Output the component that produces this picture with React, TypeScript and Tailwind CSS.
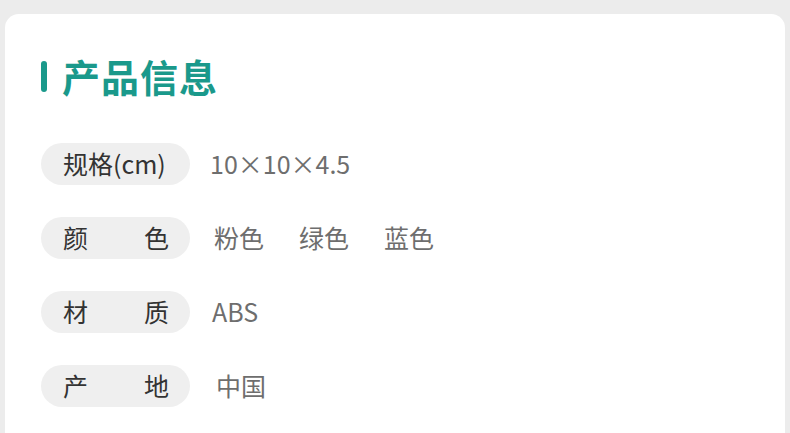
import React from 'react';

const font = { fontFamily: '"Noto Sans CJK SC", "Noto Sans", sans-serif' };

type Row = { label: string[]; values: string[]; indent: string };

const rows: Row[] = [
  { label: ['规格(cm)'], values: ['10×10×4.5'], indent: 'ml-[20px]' },
  { label: ['颜', '色'], values: ['粉色', '绿色', '蓝色'], indent: 'ml-[24px]' },
  { label: ['材', '质'], values: ['ABS'], indent: 'ml-[22px]' },
  { label: ['产', '地'], values: ['中国'], indent: 'ml-[26px]' },
];

const App: React.FC = () => {
  return (
    <div className="w-[790px] h-[433px] overflow-hidden bg-[#ececec] pt-[14px] px-[5px]" style={font}>
      {/* card */}
      <div className="h-full bg-white rounded-t-[14px] pl-[36px] pt-[40px]">
        {/* title */}
        <div className="flex items-center gap-[15px] h-[44px]">
          <div className="w-[6px] h-[31px] rounded-full bg-[#1a998b]" />
          <h2 className="text-[38px] leading-[44px] font-bold text-[#1a998b] tracking-[1px]">产品信息</h2>
        </div>

        {/* rows */}
        <div className="mt-[45px] flex flex-col gap-[32px]">
          {rows.map((row, i) => (
            <div key={i} className="flex items-center h-[42px]">
              <div className="w-[149px] h-[42px] rounded-full bg-[#efefef] pl-[22px] pr-[21px] flex items-center justify-between text-[25px] text-[#333]">
                {row.label.map((t) => (
                  <span key={t}>{t}</span>
                ))}
              </div>
              <div className={`${row.indent} flex items-center gap-[35px] text-[25px] text-[#6e6e6e]`}>
                {row.values.map((v) => (
                  <span key={v}>{v}</span>
                ))}
              </div>
            </div>
          ))}
        </div>
      </div>
    </div>
  );
};

export default App;
